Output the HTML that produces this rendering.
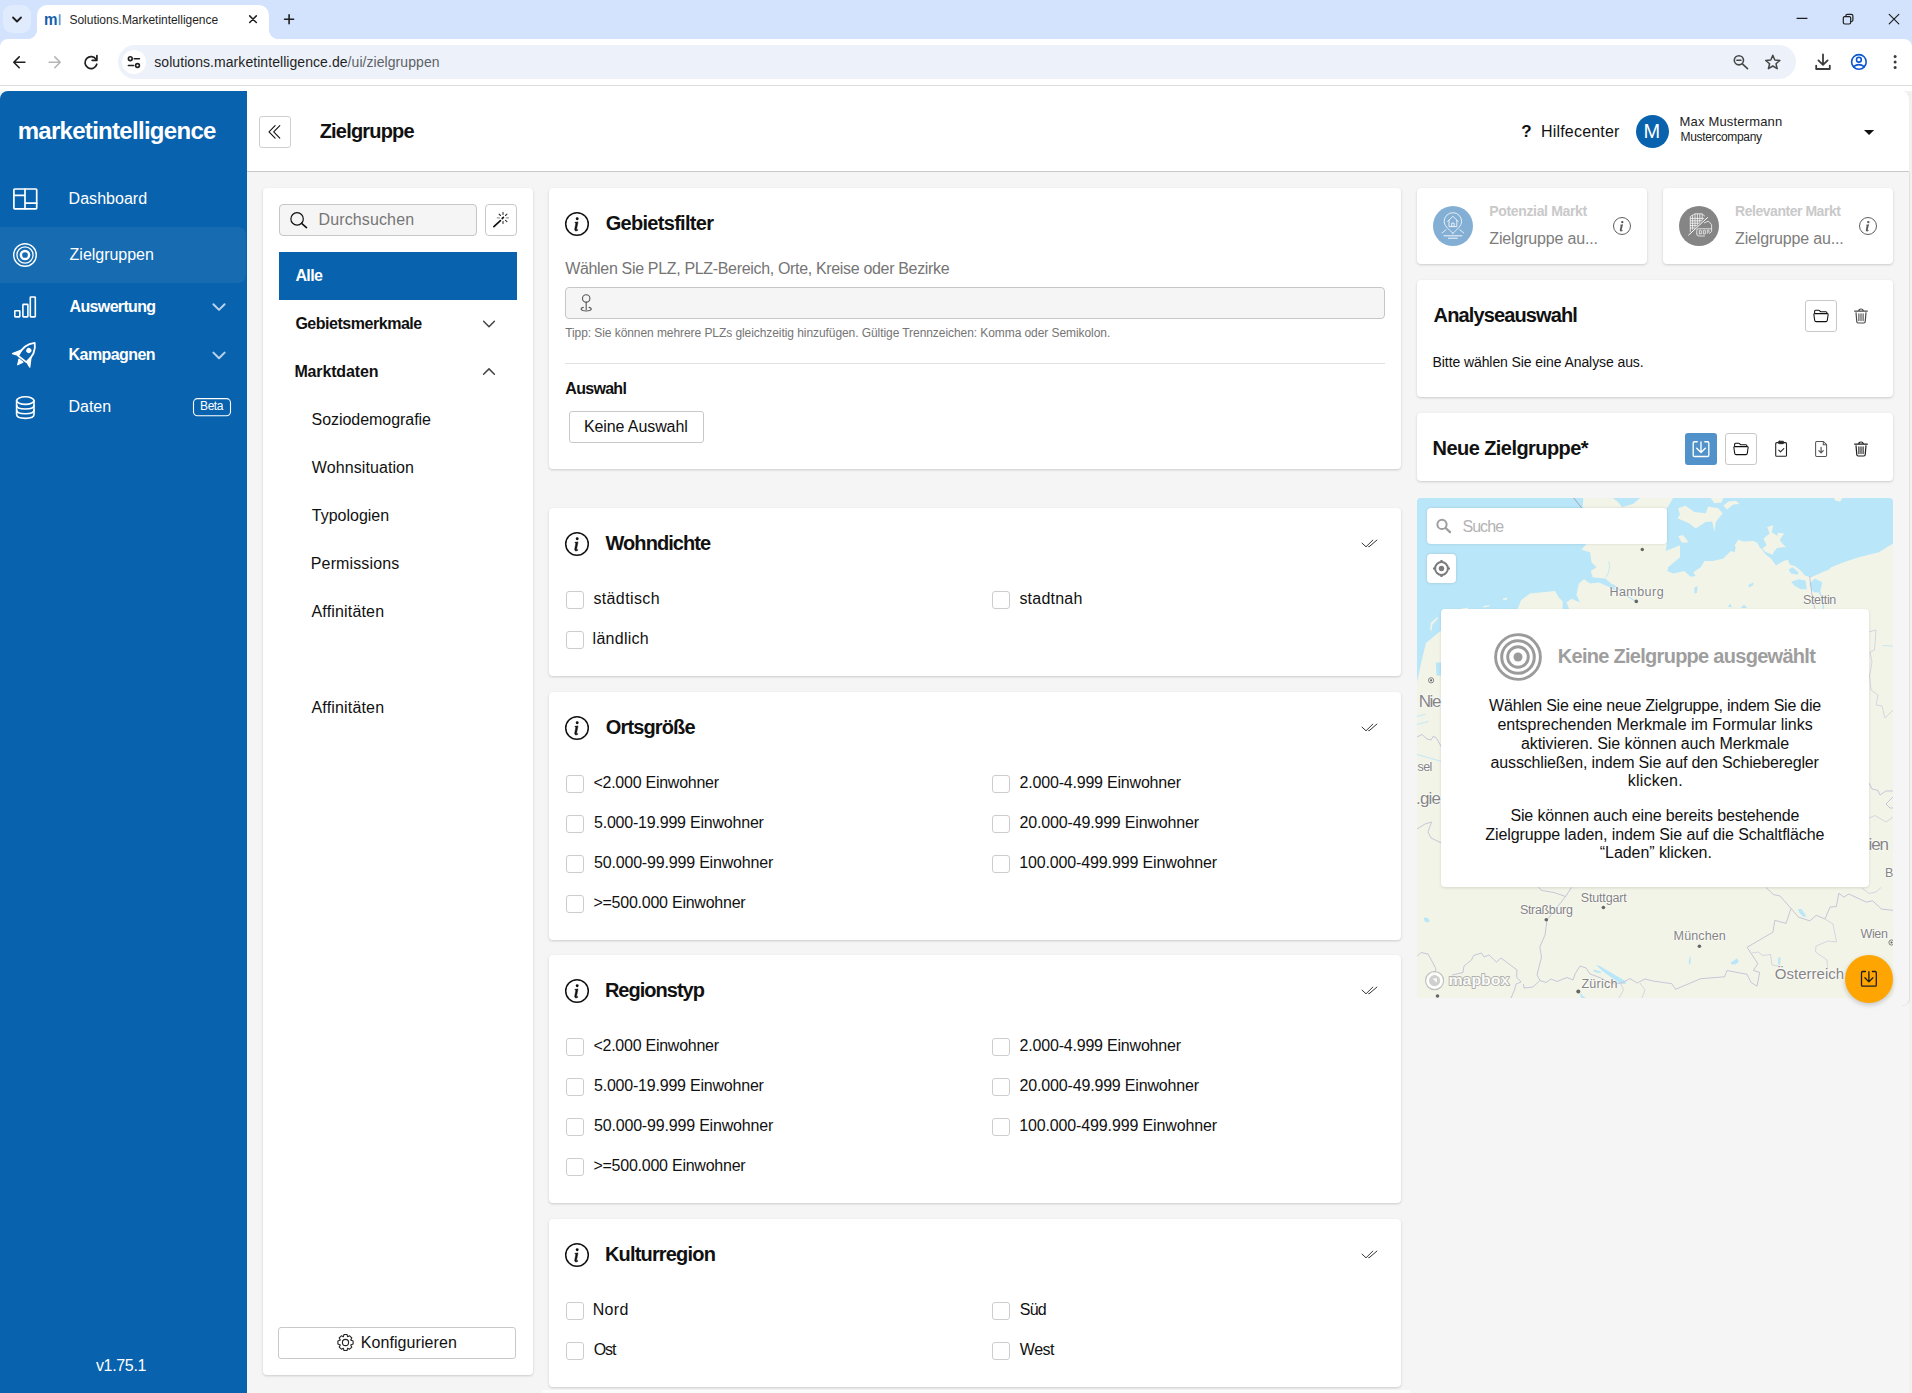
<!DOCTYPE html>
<html lang="de">
<head>
<meta charset="utf-8">
<title>Solutions.Marketintelligence</title>
<style>
*{box-sizing:border-box;margin:0;padding:0}
html,body{width:1912px;height:1393px;overflow:hidden}
body{font-family:"Liberation Sans",sans-serif;background:#f5f5f5;color:#111;position:relative;font-size:16px}
.abs{position:absolute}
.t{position:absolute;white-space:nowrap;line-height:1}
svg{display:block;overflow:visible}
/* ---------- browser chrome ---------- */
#tabstrip{left:0;top:0;width:1912px;height:50px;background:#d3e3fd}
#tabsearch{left:3px;top:5px;width:28px;height:28px;border-radius:9px;background:#e0ebfd}
#tab{left:37px;top:5px;width:232px;height:34px;background:#fff;border-radius:10px 10px 0 0}
#tab:before,#tab:after{content:"";position:absolute;bottom:0;width:10px;height:10px}
#tab:before{left:-10px;background:radial-gradient(circle at 0 0,transparent 10px,#fff 10.5px)}
#tab:after{right:-10px;background:radial-gradient(circle at 100% 0,transparent 10px,#fff 10.5px)}
#toolbar{left:0;top:39px;width:1912px;height:46px;background:#fff;border-radius:8px 8px 0 0}
#tbsep{left:0;top:85px;width:1912px;height:1px;background:#dadce0}
#undersep{left:0;top:86px;width:1912px;height:5px;background:#fff}
#omni{left:118px;top:45px;width:1678px;height:34px;border-radius:17px;background:#edf2fa}
#siteinfo{left:122px;top:50px;width:24px;height:24px;border-radius:12px;background:#fff}
/* ---------- app ---------- */
#sidebar{left:0;top:91px;width:247px;height:1302px;background:#0962ad;border-radius:8px 0 0 0;color:#fff}
#navactive{left:0;top:227px;width:246px;height:56px;background:#166bb1;border-radius:0 8px 8px 0}
#header{left:247px;top:91px;width:1663px;height:81px;background:#fff;border-bottom:1px solid #c9c9c9;border-right:1px solid #dcdcdc;border-radius:0 7px 0 0}
#rightedge{left:1909px;top:91px;width:3px;height:1302px;background:#f1f1f1}
.card{position:absolute;background:#fff;border-radius:4px;box-shadow:0 1px 3px rgba(0,0,0,.13),0 1px 2px rgba(0,0,0,.05)}
.btn{position:absolute;border:1px solid #cfcfcf;border-radius:3px;background:#fff}
.cb{position:absolute;width:18px;height:18px;border:1px solid #cdcdcd;border-radius:3px;background:#fff}
.navtxt{color:#fff;font-size:16px}
.b{font-weight:bold}
</style>
</head>
<body>
<!-- ================= BROWSER CHROME ================= -->
<div id="tabstrip" class="abs"></div>
<div id="tabsearch" class="abs"></div>
<div id="tab" class="abs"></div>
<div id="toolbar" class="abs"></div>
<div id="tbsep" class="abs"></div>
<div id="undersep" class="abs"></div>
<div id="omni" class="abs"></div>
<div id="siteinfo" class="abs"></div>
<svg class="abs" style="left:0;top:0" width="1912" height="90" viewBox="0 0 1912 90" fill="none" stroke="#1f1f1f" stroke-width="1.6" stroke-linecap="round" stroke-linejoin="round">
  <!-- tab search chevron -->
  <path d="M13 17.5 L17 21.5 L21 17.5" stroke-width="1.8"/>
  <!-- favicon mi -->
  <g stroke="none">
    <text x="44" y="25.2" style="font-family:'Liberation Sans',sans-serif" font-weight="bold" font-size="17" fill="#1460aa" textLength="13.5" lengthAdjust="spacingAndGlyphs">m</text>
    <rect x="58.8" y="14.2" width="1.8" height="11" fill="#6a9bd0"/>
  </g>
  <!-- tab close -->
  <path d="M249.7 15.9 L256.3 22.5 M256.3 15.9 L249.7 22.5" stroke-width="1.5"/>
  <!-- new tab plus -->
  <path d="M284.6 19.2 H293.6 M289.1 14.7 V23.7" stroke-width="1.6"/>
  <!-- window controls -->
  <path d="M1797 18.3 H1807" stroke-width="1.2"/>
  <rect x="1843.3" y="16.6" width="7.4" height="7.4" rx="1.4" stroke-width="1.2"/>
  <path d="M1845.8 16.4 V15.9 Q1845.8 14.4 1847.3 14.4 H1851.4 Q1852.9 14.4 1852.9 15.9 V20 Q1852.9 21.5 1851.4 21.5 H1850.9" stroke-width="1.2"/>
  <path d="M1889.2 14.3 L1898.8 23.9 M1898.8 14.3 L1889.2 23.9" stroke-width="1.2"/>
  <!-- back -->
  <path d="M24.9 62.3 H14 M19.2 56.9 L13.8 62.3 L19.2 67.7" stroke-width="1.6"/>
  <!-- forward (disabled) -->
  <path d="M49.1 62.3 H60 M54.8 56.9 L60.2 62.3 L54.8 67.7" stroke="#b6b6b6" stroke-width="1.6"/>
  <!-- reload -->
  <path d="M96.2 59.6 A6 6 0 1 0 96.8 64.2" stroke-width="1.7"/>
  <path d="M96.9 55.6 V60.3 H92.2" stroke-width="1.7"/>
  <!-- site info (tune) -->
  <g stroke-width="1.6">
    <circle cx="130.3" cy="58.7" r="1.9"/><path d="M134.2 58.7 H139.4"/>
    <circle cx="137.5" cy="65.5" r="1.9"/><path d="M128.4 65.5 H133.6"/>
  </g>
  <!-- zoom out magnifier -->
  <g stroke="#474747" stroke-width="1.6">
    <circle cx="1738.9" cy="60.3" r="4.6"/><path d="M1742.4 63.9 L1747.5 68.7"/><path d="M1736.8 60.3 H1741" stroke-width="1.4"/>
  </g>
  <!-- star -->
  <path d="M1772.8 55.3 L1774.8 60 L1779.9 60.4 L1776 63.7 L1777.2 68.7 L1772.8 66 L1768.4 68.7 L1769.6 63.7 L1765.7 60.4 L1770.8 60 Z" stroke="#474747" stroke-width="1.5"/>
  <!-- download -->
  <g stroke="#3b3b3b" stroke-width="1.8">
    <path d="M1823 54.5 V64.6 M1818.4 60.4 L1823 64.9 L1827.6 60.4"/>
    <path d="M1816.2 65.6 V69 H1829.8 V65.6"/>
  </g>
  <!-- profile -->
  <g stroke="#0b57d0" stroke-width="1.6">
    <circle cx="1858.9" cy="61.9" r="7.3"/>
    <circle cx="1858.9" cy="59.7" r="2.4"/>
    <path d="M1853.6 66.6 Q1858.9 62.6 1864.2 66.6"/>
  </g>
  <!-- menu dots -->
  <g fill="#3b3b3b" stroke="none"><circle cx="1895.1" cy="56.5" r="1.5"/><circle cx="1895.1" cy="62" r="1.5"/><circle cx="1895.1" cy="67.5" r="1.5"/></g>
</svg>

<!-- ================= APP ================= -->
<div id="sidebar" class="abs"></div>
<div id="navactive" class="abs"></div>
<div id="header" class="abs"></div>
<div id="rightedge" class="abs"></div>
<div class="abs" style="left:1902px;top:172px;width:8px;height:834px;border-right:1px solid #e1e1e1;border-bottom:1px solid #e9e9e9;border-bottom-right-radius:7px"></div>
<svg class="abs" style="left:0;top:91px" width="247" height="400" viewBox="0 91 247 400" fill="none" stroke="#fff" stroke-width="1.7" stroke-linejoin="round" stroke-linecap="round">
  <!-- dashboard -->
  <rect x="13.9" y="189" width="22.8" height="19.8" rx="0.8"/>
  <path d="M25 189 V208.8 M13.9 195.4 H25 M25 203.2 H36.7"/>
  <!-- zielgruppen target -->
  <circle cx="25" cy="255" r="11.3" stroke-width="1.4"/>
  <circle cx="25" cy="255" r="8.1" stroke-width="1.3"/>
  <circle cx="25" cy="255" r="4.1" stroke-width="2.5"/>
  <!-- bars -->
  <rect x="14.8" y="310.7" width="5" height="6.2" rx="0.6" stroke-width="1.6"/>
  <rect x="22.9" y="304.4" width="5" height="12.5" rx="0.6" stroke-width="1.6"/>
  <rect x="30.3" y="297" width="5" height="19.9" rx="0.6" stroke-width="1.6"/>
  <!-- rocket -->
  <g transform="translate(25 355.4) rotate(38)">
    <path d="M0 -15.8 C5.6 -10.5 7 -3 5.2 4.5 H-5.2 C-7 -3 -5.6 -10.5 0 -15.8 Z" stroke-width="1.8"/>
    <circle cx="0" cy="-6.2" r="2.6" fill="#fff" stroke="none"/>
    <path d="M-5.8 -2.5 L-11 6.3 L-5.2 4.2 Z" fill="#fff" stroke-width="1.2"/>
    <path d="M5.8 -2.5 L11 6.3 L5.2 4.2 Z" fill="#fff" stroke-width="1.2"/>
    <path d="M-2.6 6.6 H2.6 L0 12 Z" fill="#fff" stroke-width="1"/>
  </g>
  <!-- database -->
  <g stroke-width="1.6">
    <ellipse cx="25.3" cy="400.6" rx="8.7" ry="3.8"/>
    <path d="M16.6 400.6 V414.6 C16.6 419.6 34 419.6 34 414.6 V400.6"/>
    <path d="M16.6 405.3 C16.6 410.3 34 410.3 34 405.3"/>
    <path d="M16.6 410 C16.6 415 34 415 34 410"/>
  </g>
  <!-- chevrons -->
  <path d="M213.4 304.3 L219 309.9 L224.6 304.3" stroke="#bcd3ea" stroke-width="2"/>
  <path d="M213.4 352.6 L219 358.2 L224.6 352.6" stroke="#bcd3ea" stroke-width="2"/>
  <!-- beta badge -->
  <rect x="193.5" y="398.6" width="37" height="17.2" rx="4" stroke-width="1.1"/>
</svg>
<div class="btn" style="left:259px;top:116px;width:32px;height:32px"></div>
<svg class="abs" style="left:259px;top:116px" width="32" height="32" viewBox="259 116 32 32" fill="none" stroke="#111" stroke-width="1.1" stroke-linecap="round" stroke-linejoin="round">
  <path d="M275.1 125.7 L269 131.9 L275.1 138.1 M279.8 125.7 L273.7 131.9 L279.8 138.1"/>
</svg>
<div class="abs" style="left:1636px;top:115px;width:33px;height:33px;border-radius:50%;background:#0962ad"></div>
<svg class="abs" style="left:1860px;top:126px" width="20" height="12" viewBox="1860 126 20 12"><path d="M1864 130 H1874.2 L1869.1 135.1 Z" fill="#111"/></svg>

<!-- sub navigation panel -->
<div class="card" style="left:263px;top:188px;width:270px;height:1187px"></div>
<div class="abs" style="left:279px;top:204px;width:198px;height:32px;background:#f5f5f5;border:1px solid #c6c6c6;border-radius:4px"></div>
<div class="btn" style="left:485px;top:204px;width:32px;height:32px;border-color:#c9c9c9;border-radius:4px"></div>
<div class="abs" style="left:279px;top:252px;width:238px;height:48px;background:#0962ad"></div>
<svg class="abs" style="left:263px;top:188px" width="270" height="200" viewBox="263 188 270 200" fill="none" stroke="#111" stroke-linecap="round" stroke-linejoin="round">
  <!-- magnifier -->
  <circle cx="297.1" cy="218.9" r="6.2" stroke-width="1.2"/><path d="M301.6 223.4 L306.5 227.6" stroke-width="1.6"/>
  <!-- wand -->
  <path d="M493.9 226.6 L500.4 220.6" stroke-width="1.7"/>
  <path d="M502.2 218.5 L503.4 217.4" stroke-width="1.7"/>
  <g stroke-width="1.1" stroke="#333">
    <path d="M503 212.3 V214.5 M503 221.3 V223.5" />
    <path d="M497.3 217.9 H499.5 M506.3 217.9 H508.5" stroke="#999"/>
    <path d="M499.1 214.1 L500.5 215.5 M506.9 214.1 L505.5 215.5 M506.9 221.7 L505.5 220.3"/>
  </g>
  <!-- chevrons -->
  <path d="M483.6 321.3 L489 326.7 L494.4 321.3" stroke="#444" stroke-width="1.5"/>
  <path d="M483.6 374.3 L489 368.9 L494.4 374.3" stroke="#444" stroke-width="1.5"/>
</svg>
<div class="btn" style="left:278px;top:1327px;width:238px;height:32px;border-color:#c9c9c9"></div>
<svg class="abs" style="left:335px;top:1332px" width="21" height="21" viewBox="-10.5 -10.5 21 21" fill="none" stroke="#222" stroke-width="1.1" stroke-linejoin="round">
  <circle r="3.1"/>
  <path d="M-1.5 -8 H1.5 L2.1 -5.8 L4.1 -6.7 L6.3 -4.6 L5.2 -2.6 L7.6 -1.6 V1.6 L5.2 2.6 L6.3 4.6 L4.1 6.7 L2.1 5.8 L1.5 8 H-1.5 L-2.1 5.8 L-4.1 6.7 L-6.3 4.6 L-5.2 2.6 L-7.6 1.6 V-1.6 L-5.2 -2.6 L-6.3 -4.6 L-4.1 -6.7 L-2.1 -5.8 Z"/>
</svg>

<!-- centre cards -->
<div class="card" style="left:549px;top:188px;width:852px;height:281px"></div>
<div class="card" style="left:549px;top:508px;width:852px;height:168px"></div>
<div class="card" style="left:549px;top:692px;width:852px;height:248px"></div>
<div class="card" style="left:549px;top:955px;width:852px;height:248px"></div>
<div class="card" style="left:549px;top:1219px;width:852px;height:168px"></div>
<div class="abs" style="left:542px;top:1390px;width:868px;height:3px;background:#fbfbfb"></div>
<svg class="abs" style="left:563.9px;top:210.85px;color:#111" width="26" height="26" viewBox="-13 -13 26 26"><circle r="11.3" fill="none" stroke="currentColor" stroke-width="1.5"/><circle cx="0.2" cy="-5.2" r="1.45" fill="currentColor"/><path d="M-2 -1.7 L1 -2.1 L-0.4 5 Q-0.6 6.2 0.8 5.6 L0.9 6.2 Q-1.2 7.6 -2 6.6 Q-2.5 6 -2.2 4.6 L-1.1 -0.9 L-2.1 -1 Z" fill="currentColor" stroke="currentColor" stroke-width="0.5" stroke-linejoin="round"/></svg>
<svg class="abs" style="left:563.9px;top:530.85px;color:#111" width="26" height="26" viewBox="-13 -13 26 26"><circle r="11.3" fill="none" stroke="currentColor" stroke-width="1.5"/><circle cx="0.2" cy="-5.2" r="1.45" fill="currentColor"/><path d="M-2 -1.7 L1 -2.1 L-0.4 5 Q-0.6 6.2 0.8 5.6 L0.9 6.2 Q-1.2 7.6 -2 6.6 Q-2.5 6 -2.2 4.6 L-1.1 -0.9 L-2.1 -1 Z" fill="currentColor" stroke="currentColor" stroke-width="0.5" stroke-linejoin="round"/></svg>
<svg class="abs" style="left:563.9px;top:714.85px;color:#111" width="26" height="26" viewBox="-13 -13 26 26"><circle r="11.3" fill="none" stroke="currentColor" stroke-width="1.5"/><circle cx="0.2" cy="-5.2" r="1.45" fill="currentColor"/><path d="M-2 -1.7 L1 -2.1 L-0.4 5 Q-0.6 6.2 0.8 5.6 L0.9 6.2 Q-1.2 7.6 -2 6.6 Q-2.5 6 -2.2 4.6 L-1.1 -0.9 L-2.1 -1 Z" fill="currentColor" stroke="currentColor" stroke-width="0.5" stroke-linejoin="round"/></svg>
<svg class="abs" style="left:563.9px;top:977.85px;color:#111" width="26" height="26" viewBox="-13 -13 26 26"><circle r="11.3" fill="none" stroke="currentColor" stroke-width="1.5"/><circle cx="0.2" cy="-5.2" r="1.45" fill="currentColor"/><path d="M-2 -1.7 L1 -2.1 L-0.4 5 Q-0.6 6.2 0.8 5.6 L0.9 6.2 Q-1.2 7.6 -2 6.6 Q-2.5 6 -2.2 4.6 L-1.1 -0.9 L-2.1 -1 Z" fill="currentColor" stroke="currentColor" stroke-width="0.5" stroke-linejoin="round"/></svg>
<svg class="abs" style="left:563.9px;top:1241.85px;color:#111" width="26" height="26" viewBox="-13 -13 26 26"><circle r="11.3" fill="none" stroke="currentColor" stroke-width="1.5"/><circle cx="0.2" cy="-5.2" r="1.45" fill="currentColor"/><path d="M-2 -1.7 L1 -2.1 L-0.4 5 Q-0.6 6.2 0.8 5.6 L0.9 6.2 Q-1.2 7.6 -2 6.6 Q-2.5 6 -2.2 4.6 L-1.1 -0.9 L-2.1 -1 Z" fill="currentColor" stroke="currentColor" stroke-width="0.5" stroke-linejoin="round"/></svg>
<svg class="abs" style="left:1360.9px;top:539.0px" width="18" height="10" viewBox="0 0 18 10"><path d="M1 4.1 L5 7.8 L11.8 1.1 M7.6 7.6 L7.9 7.9 L15.9 1.1" fill="none" stroke="#2b2b2b" stroke-width="0.95" stroke-linecap="round" stroke-linejoin="round"/></svg>
<svg class="abs" style="left:1360.9px;top:723.0px" width="18" height="10" viewBox="0 0 18 10"><path d="M1 4.1 L5 7.8 L11.8 1.1 M7.6 7.6 L7.9 7.9 L15.9 1.1" fill="none" stroke="#2b2b2b" stroke-width="0.95" stroke-linecap="round" stroke-linejoin="round"/></svg>
<svg class="abs" style="left:1360.9px;top:986.0px" width="18" height="10" viewBox="0 0 18 10"><path d="M1 4.1 L5 7.8 L11.8 1.1 M7.6 7.6 L7.9 7.9 L15.9 1.1" fill="none" stroke="#2b2b2b" stroke-width="0.95" stroke-linecap="round" stroke-linejoin="round"/></svg>
<svg class="abs" style="left:1360.9px;top:1250.0px" width="18" height="10" viewBox="0 0 18 10"><path d="M1 4.1 L5 7.8 L11.8 1.1 M7.6 7.6 L7.9 7.9 L15.9 1.1" fill="none" stroke="#2b2b2b" stroke-width="0.95" stroke-linecap="round" stroke-linejoin="round"/></svg>
<div class="abs" style="left:565px;top:287px;width:820px;height:32px;background:#f5f5f5;border:1px solid #c6c6c6;border-radius:4px"></div>
<svg class="abs" style="left:578px;top:292px" width="18" height="22" viewBox="578 292 18 22" fill="none" stroke="#555" stroke-width="1.1" stroke-linecap="round"><circle cx="586.2" cy="298.4" r="3.7"/><path d="M586.2 302.2 V309.6"/><path d="M583.3 307.4 C579.6 308.4 580.6 311 586.2 311 C591.8 311 592.8 308.4 589.1 307.4"/></svg>
<div class="abs" style="left:565px;top:363px;width:820px;height:1px;background:#e2e2e2"></div>
<div class="btn" style="left:569px;top:411px;width:135px;height:32px;border-color:#c9c9c9"></div>
<div class="cb" style="left:566px;top:591px"></div>
<div class="cb" style="left:992px;top:591px"></div>
<div class="cb" style="left:566px;top:631px"></div>
<div class="cb" style="left:566px;top:775px"></div>
<div class="cb" style="left:992px;top:775px"></div>
<div class="cb" style="left:566px;top:815px"></div>
<div class="cb" style="left:992px;top:815px"></div>
<div class="cb" style="left:566px;top:855px"></div>
<div class="cb" style="left:992px;top:855px"></div>
<div class="cb" style="left:566px;top:895px"></div>
<div class="cb" style="left:566px;top:1038px"></div>
<div class="cb" style="left:992px;top:1038px"></div>
<div class="cb" style="left:566px;top:1078px"></div>
<div class="cb" style="left:992px;top:1078px"></div>
<div class="cb" style="left:566px;top:1118px"></div>
<div class="cb" style="left:992px;top:1118px"></div>
<div class="cb" style="left:566px;top:1158px"></div>
<div class="cb" style="left:566px;top:1302px"></div>
<div class="cb" style="left:992px;top:1302px"></div>
<div class="cb" style="left:566px;top:1342px"></div>
<div class="cb" style="left:992px;top:1342px"></div>

<!-- right column -->
<div class="card" style="left:1417px;top:188px;width:230px;height:76px"></div>
<div class="card" style="left:1663px;top:188px;width:230px;height:76px"></div>
<div class="card" style="left:1417px;top:280px;width:476px;height:117px"></div>
<div class="card" style="left:1417px;top:413px;width:476px;height:68px"></div>
<!-- stat cards -->
<div class="abs" style="left:1433px;top:206px;width:40px;height:40px;border-radius:50%;background:#84afd5"></div>
<svg class="abs" style="left:1433px;top:206px" width="40" height="40" viewBox="1433 206 40 40" fill="none" stroke="#fff" stroke-width="0.8" stroke-linecap="round" stroke-linejoin="round">
  <path d="M1452.9 233.3 C1448 228.6 1444.2 225.6 1444.2 221.4 A8.7 8.7 0 0 1 1461.6 221.4 C1461.6 225.6 1457.8 228.6 1452.9 233.3 Z"/>
  <path d="M1447.6 221.4 L1452.9 216.3 L1458.2 221.4 M1449 220.3 V226.6 H1456.8 V220.3 M1451.7 226.6 V223.2 H1454.1 V226.6"/>
  <path d="M1442 233 L1446 229.8 M1463.8 233 L1459.8 229.8"/>
  <path d="M1444 235.8 H1461.8 M1448.4 238.2 H1457.4" stroke-width="0.9"/>
</svg>
<div class="abs" style="left:1679px;top:206px;width:40px;height:40px;border-radius:50%;background:#858585"></div>
<svg class="abs" style="left:1679px;top:206px" width="40" height="40" viewBox="1679 206 40 40" fill="none" stroke="#fff" stroke-width="0.75" stroke-linecap="round" stroke-linejoin="round">
  <path d="M1690.3 231.5 V216.5 L1695 213.8 H1702 L1704.6 216 "/>
  <path d="M1692.6 215.4 V229.3 M1695 214.2 V227 M1697.4 214.2 V224.8 M1699.8 214.2 V222.4 M1702.2 214.2 V220"/>
  <path d="M1690.3 218.4 H1703.8 M1690.3 220.8 H1701.6 M1690.3 223.2 H1699.4 M1690.3 225.6 H1697.2 M1690.3 228 H1694.8"/>
  <path d="M1688.7 235 L1707.6 217.5" stroke-width="1"/>
  <path d="M1704.4 222.8 L1708.4 221.2 L1711.6 224.6 V231.4 L1709.6 233.4"/>
  <path d="M1696.8 234 V230 Q1696.8 228.8 1698 228.8 H1711 M1696.8 234 Q1696.8 236 1698.8 236 H1704.5"/>
  <path d="M1699.3 233.6 V230.6 Q1700.3 229.8 1701.3 230.6 V233.6 Z M1703.3 233.6 V230.6 Q1704.3 229.8 1705.3 230.6 V233.6 Z M1707.3 233.2 V230.4 Q1708.2 229.7 1709 230.4 V232.4"/>
</svg>
<svg class="abs" style="left:1608.8px;top:212.9px;color:#5a5a5a" width="26" height="26" viewBox="-17.3 -17.3 34.6 34.6"><circle r="11.3" fill="none" stroke="currentColor" stroke-width="1.3"/><circle cx="0.4" cy="-5.2" r="1.6" fill="currentColor"/><path d="M-2.4 -1.6 L1.4 -2.2 L-0.4 5 Q-0.6 6.2 1 5.6 L1.1 6.3 Q-1.4 7.9 -2.6 6.8 Q-3.1 6.2 -2.8 4.6 L-1.7 -0.7 L-2.5 -0.8 Z" fill="currentColor"/></svg>
<svg class="abs" style="left:1854.7px;top:212.9px;color:#5a5a5a" width="26" height="26" viewBox="-17.3 -17.3 34.6 34.6"><circle r="11.3" fill="none" stroke="currentColor" stroke-width="1.3"/><circle cx="0.4" cy="-5.2" r="1.6" fill="currentColor"/><path d="M-2.4 -1.6 L1.4 -2.2 L-0.4 5 Q-0.6 6.2 1 5.6 L1.1 6.3 Q-1.4 7.9 -2.6 6.8 Q-3.1 6.2 -2.8 4.6 L-1.7 -0.7 L-2.5 -0.8 Z" fill="currentColor"/></svg>
<!-- Analyseauswahl actions -->
<div class="btn" style="left:1805px;top:300px;width:32px;height:32px;border-color:#c9c9c9"></div>
<svg class="abs" style="left:1813px;top:308px;color:#111" width="16" height="16" viewBox="0 0 16 16"><path d="M1.6 5.3 V3.2 Q1.6 2.3 2.5 2.3 H5.6 Q6.2 2.3 6.7 2.8 L7.5 3.7 H12.8 Q13.9 3.7 13.9 4.8 V5.5" fill="none" stroke="currentColor" stroke-width="1.05" stroke-linejoin="round"/><path d="M1.9 5.6 H14.1 Q15.3 5.6 15.1 6.8 L14.3 12.4 Q14.1 13.6 12.9 13.6 H3.1 Q1.9 13.6 1.7 12.4 L0.9 6.8 Q0.7 5.6 1.9 5.6 Z" fill="none" stroke="currentColor" stroke-width="1.05" stroke-linejoin="round"/></svg>
<svg class="abs" style="left:1854px;top:308px;color:#4a4a4a" width="14" height="16" viewBox="0 0 14 16"><path d="M0.7 3.2 H13.3 M4.8 3 Q4.8 1 7 1 Q9.2 1 9.2 3" fill="none" stroke="currentColor" stroke-width="1.2" stroke-linecap="round"/><path d="M2 4.4 L2.8 13.8 Q2.9 15 4.1 15 H9.9 Q11.1 15 11.2 13.8 L12 4.4" fill="none" stroke="currentColor" stroke-width="1.2" stroke-linejoin="round"/><path d="M4.9 5.8 V12.6 M7 5.8 V12.6 M9.1 5.8 V12.6" stroke="currentColor" stroke-width="1.1" stroke-linecap="round"/></svg>
<!-- Neue Zielgruppe actions -->
<div class="abs" style="left:1685px;top:433px;width:32px;height:32px;border-radius:3px;background:#5092c9"></div>
<svg class="abs" style="left:1685px;top:433px" width="32" height="32" viewBox="1685 433 32 32" fill="none" stroke="#fff" stroke-width="1.35" stroke-linecap="round" stroke-linejoin="round">
  <path d="M1697.2 441.7 H1694.4 Q1693.2 441.7 1693.2 442.9 V455.3 Q1693.2 456.5 1694.4 456.5 H1707.6 Q1708.8 456.5 1708.8 455.3 V442.9 Q1708.8 441.7 1707.6 441.7 H1704.8"/>
  <path d="M1701 441.9 V452.2 M1696.7 448.2 L1701 452.5 L1705.3 448.2"/>
</svg>
<div class="btn" style="left:1725px;top:433px;width:32px;height:32px;border-color:#c9c9c9"></div>
<svg class="abs" style="left:1733px;top:441px;color:#111" width="16" height="16" viewBox="0 0 16 16"><path d="M1.6 5.3 V3.2 Q1.6 2.3 2.5 2.3 H5.6 Q6.2 2.3 6.7 2.8 L7.5 3.7 H12.8 Q13.9 3.7 13.9 4.8 V5.5" fill="none" stroke="currentColor" stroke-width="1.05" stroke-linejoin="round"/><path d="M1.9 5.6 H14.1 Q15.3 5.6 15.1 6.8 L14.3 12.4 Q14.1 13.6 12.9 13.6 H3.1 Q1.9 13.6 1.7 12.4 L0.9 6.8 Q0.7 5.6 1.9 5.6 Z" fill="none" stroke="currentColor" stroke-width="1.05" stroke-linejoin="round"/></svg>
<svg class="abs" style="left:1773px;top:439px" width="16" height="20" viewBox="1773 439 16 20" fill="none" stroke="#222" stroke-width="1.1" stroke-linecap="round" stroke-linejoin="round">
  <path d="M1778.3 442.6 H1776.8 Q1775.7 442.6 1775.7 443.7 V455.2 Q1775.7 456.3 1776.8 456.3 H1785.4 Q1786.5 456.3 1786.5 455.2 V443.7 Q1786.5 442.6 1785.4 442.6 H1783.9"/>
  <rect x="1778.4" y="441.2" width="5.4" height="2.5" rx="0.9" fill="#222" stroke-width="0.8"/>
  <path d="M1778.8 450.2 L1780.5 451.9 L1783.8 448.6"/>
</svg>
<svg class="abs" style="left:1813px;top:439px" width="16" height="20" viewBox="1813 439 16 20" fill="none" stroke="#555" stroke-width="1.05" stroke-linecap="round" stroke-linejoin="round">
  <path d="M1823.4 441.5 H1816.8 Q1815.6 441.5 1815.6 442.7 V455.2 Q1815.6 456.4 1816.8 456.4 H1825.4 Q1826.6 456.4 1826.6 455.2 V444.7 Z"/>
  <path d="M1823.3 441.7 V444.8 H1826.4" />
  <path d="M1821.1 447.4 V452.6 M1818.9 450.6 L1821.1 452.8 L1823.3 450.6" stroke-width="1.2"/>
</svg>
<svg class="abs" style="left:1854px;top:441px;color:#1c1c1c" width="14" height="16" viewBox="0 0 14 16"><path d="M0.7 3.2 H13.3 M4.8 3 Q4.8 1 7 1 Q9.2 1 9.2 3" fill="none" stroke="currentColor" stroke-width="1.2" stroke-linecap="round"/><path d="M2 4.4 L2.8 13.8 Q2.9 15 4.1 15 H9.9 Q11.1 15 11.2 13.8 L12 4.4" fill="none" stroke="currentColor" stroke-width="1.2" stroke-linejoin="round"/><path d="M4.9 5.8 V12.6 M7 5.8 V12.6 M9.1 5.8 V12.6" stroke="currentColor" stroke-width="1.1" stroke-linecap="round"/></svg>
<!--RIGHT-CONTENT-END-->
<div class="abs" style="left:1417px;top:498px;width:476px;height:500px;border-radius:4px;overflow:hidden;background:#f3f4e8">
<svg width="476" height="500" viewBox="1417 498 476 500" style="position:absolute;left:0;top:0">
  <g fill="#b9e6f8" stroke="none">
    <!-- North Sea -->
    <path d="M1417 498 H1583.3 L1582.7 507.7 L1585.8 544.7 L1581.4 549.7 L1590.2 552.2 L1591.5 562.3 L1596.5 567.3 L1590.8 571.1 L1592.7 577.3 L1605.3 578.6 L1612.8 584.9 L1617.8 592.4 L1610.3 587.4 L1599 582.4 L1590.2 583.6 L1583.9 579.2 L1578.9 583.6 L1576.4 594.9 L1580.2 602.4 L1571.4 598.7 L1566.4 602.4 L1569.5 609.5 L1562.6 609.5 L1562.6 601.2 L1558.8 597.4 L1555.1 591.1 L1530 593.6 L1521.2 599.9 L1517.4 609.5 L1500 620 L1441.7 630 L1426 643 L1421.8 660 L1418.6 675 L1417 682 Z"/>
    <!-- Baltic -->
    <path d="M1673.1 498 L1669.3 504.5 L1666.8 508.3 L1666.8 544.1 L1665.6 551 L1680 545.3 L1680 557.2 L1668.1 567.3 L1667.4 571.1 L1673.1 573.6 L1684.4 571.1 L1690.7 576.7 L1695.7 576.1 L1693.2 572.3 L1700.7 567.3 L1704.5 561 L1713.2 561 L1723.3 558.5 L1730.8 551 L1734.6 552.2 L1735.8 547.2 L1734.6 545.3 L1738.4 539.7 L1743.4 541.6 L1753.4 540.9 L1757.2 542.8 L1759.7 547.2 L1762.2 549.7 L1766 554.7 L1771 558.5 L1776 565.4 L1783.5 561 L1787.9 559.8 L1789.8 564.8 L1794.8 566 L1801.1 571.1 L1804.9 575.4 L1811.2 577.3 L1825 571.1 L1828.7 569.8 L1831.2 567.3 L1843.8 562.3 L1858.8 557.2 L1878.9 552.2 L1889 546 L1893 543.4 V498 Z"/>
    <path d="M1613 498 H1640 L1633 504 L1622 507 L1618 502 Z"/>
    <!-- lagoons / lakes -->
    <path d="M1791.1 581.7 L1798.6 579.2 L1805.5 580.5 L1806.8 589.3 L1801.1 589.3 L1794.8 586.1 Z"/>
    <path d="M1809.3 583.6 L1814.9 578.6 L1822.4 582.4 L1819.9 592.4 L1814.9 592.4 L1811.2 589.9 Z"/>
    <path d="M1788.6 569.8 L1792.3 567.3 L1798.6 572.3 L1797.3 574.8 L1791.1 573.6 Z"/>
    <path d="M1748.4 584.9 L1753.4 582.4 L1753.4 584.9 L1749 587.4 Z"/>
    <path d="M1694.4 587.4 L1697.6 586.1 L1696.9 593 L1694.4 593.6 Z"/>
    <path d="M1435.8 662.5 H1441.7 V675.4 H1436.5 Z"/>
    <path d="M1728 607 L1730 603.5 L1732 607 Z M1741 608 L1744 604.5 L1747 608 Z"/>
    <!-- small south lakes -->
    <path d="M1690.3 955 L1688.6 962 L1689.6 965.5 L1690.8 961 Z"/>
    <path d="M1731 962.5 L1737 958.2 L1738.8 961.2 L1736 964.3 L1731 964.6 Z"/>
    <path d="M1778.3 957.5 H1780.6 L1780.2 964.5 H1778 Z"/>
    <path d="M1798 909 L1801.5 909 L1806.5 916.3 L1803.5 916.8 L1799.5 913 Z"/>
    <path d="M1424 917.5 L1428 918 L1429.8 921.5 L1426.5 922.5 L1424.2 920.5 Z"/>
    <path d="M1596.3 965.3 L1599 965.5 L1624.5 980.5 L1626.5 984 L1620 983.2 L1610 976.5 L1603 971.5 Z"/>
    <path d="M1593.5 969.5 L1600.5 971.5 L1601 973.2 L1594 972 Z"/>
    <path d="M1580 992 L1583 996 L1586 998 H1581 Z"/>
  </g>
  <g fill="#f3f4e8" stroke="none">
    <!-- Danish islands -->
    <path d="M1678.1 508.3 L1685.6 505.8 L1694.4 512.1 L1705.7 513.3 L1708.2 506.4 L1718.3 508.3 L1722.7 513.3 L1715.8 522.1 L1714.5 531.5 L1712 521.5 L1705.7 522.1 L1695.7 528.4 L1689.4 523.4 L1677.5 518.3 L1680 514.6 Z"/>
    <path d="M1678.1 535.9 L1683.1 535.3 L1688.8 542.2 L1681.9 542.8 Z"/>
    <path d="M1710.7 498 H1723.3 L1721.4 502.6 L1714.5 503.3 Z"/>
    <path d="M1723.3 505.8 L1728.3 501.4 L1735.8 500.8 L1739.6 503.9 L1733.3 504.5 L1727.1 509.6 Z"/>
    <!-- Ruegen -->
    <path d="M1763.5 538.4 L1769.7 533.4 L1767.2 527.1 L1773.5 525.2 L1771.6 532.1 L1777.3 535.9 L1777.9 532.8 L1784.2 533.4 L1779.8 539.7 L1782.3 543.4 L1786 547.2 L1783.5 547.2 L1777.3 547.8 L1773.5 552.2 L1772.9 554.7 L1766 552.2 L1762.2 548.5 L1766.6 545.3 Z"/>
    <path d="M1833.7 498 H1842.5 L1840 501.4 L1835.6 500.8 Z"/>
    <!-- frisian islands -->
    <path d="M1503 598.5 L1507.5 597.6 L1507 599.4 L1503.2 600.2 Z M1483 606.3 L1489.5 605 L1489 606.6 L1483.3 607.6 Z M1462 608.5 L1468 607.6 V609 H1462 Z"/>
    <path d="M1431 622.5 L1437.5 617 L1438 618.5 L1432.5 624.5 L1431.3 631 L1430 630 Z"/>
  </g>
  <!-- rivers -->
  <g fill="none" stroke="#b9e6f8" stroke-width="1.3" stroke-linecap="round">
    <path d="M1612.8 584.9 L1620 590 L1628 596.5 L1636 601.5"/>
    <path d="M1609 562 Q1611 570 1606 577" stroke-width="0.9"/>
    <path d="M1819.9 592.4 L1822.5 600 L1823.5 609" stroke-width="1.6"/>
    <path d="M1417 716.5 L1425 714.5 M1417 724.5 L1428 721.5 M1417 754.5 L1441.5 761.5" stroke-width="0.9"/>
    <path d="M1883 645.5 L1893 646" stroke-width="0.8"/>
  </g>
  <!-- borders -->
  <g fill="none" stroke="#bcbed6" stroke-width="0.85" stroke-linejoin="round">
    <path d="M1573.9 498 L1581.4 507.7" stroke="#9a9aa8"/>
    <path d="M1809.6 576 L1812.3 597 L1815 609.5"/>
    <!-- NL/DE & BE borders left strip -->
    <path d="M1417 737 L1422 734.5 L1427 739 L1431 740 L1433 736.5 L1436 737.5 L1441.5 747"/>
    <path d="M1417 829 L1425 824 L1431.5 822 L1428 832 L1431 838 L1441.5 843"/>
    <!-- right strip -->
    <path d="M1869 632 L1876 630 L1874.5 650 L1870 652 L1872 662 L1869.5 676 L1871 690 L1878 695 L1876 705 L1882 706 L1885 718 L1893 710" stroke="#cfd0de"/>
    <path d="M1869 783 L1872 789 L1878 790.5 L1880 795 L1886 791 L1893 791"/>
    <path d="M1893 797 L1886 804 L1890 808 L1893 808"/>
    <path d="M1869 818 L1875 815.5 L1886 822 L1893 817" stroke="#cfd0de"/>
    <!-- Rhine / FR-DE -->
    <path d="M1571.4 887.5 L1565.6 896.5 L1547 920 L1545 935 L1539.8 947 L1541.5 957 L1537 975 L1540 980.5 L1533 987 L1524 988 L1523.5 984"/>
    <path d="M1538.5 887.5 L1542 890.5 L1554 892.5 L1565.6 896.5"/>
    <path d="M1540 980.5 L1546 982.5 L1551 979 L1557 981.5 L1567 977.5 L1573 980 L1575 974 L1580 966 L1586 968 L1590 974 L1601 978"/>
    <path d="M1417 956.5 L1421 952.5 L1428 954 L1433 963 L1436 969 L1433.5 975 M1452 975 L1463 972.5 L1464 966 L1471.5 960 L1473.5 955.5 L1481.5 953 L1484 957 L1489 955 L1496.5 962 L1501 958 L1517 970 L1516.5 977 L1521 982 L1516 984 L1514.5 990 L1511 998"/>
    <!-- DE-AT -->
    <path d="M1653 981 L1671.8 983.7 L1675.6 989.3 L1700.7 978.7 L1724.5 976.8 L1727 970.5 L1747 974.3 L1751 982.4 L1757 986.2 L1759.7 972.4 L1753.4 970.5 L1757.8 963.6 L1747.1 947.3 L1772.9 932.2 L1774.8 920.3 L1786 923.4 L1791 908.4 L1779.8 895.8 L1773.5 894.6 L1766 887.5"/>
    <path d="M1601 978 L1612 984 L1622 983 L1630 978.5 L1637 983 L1645 979 L1653 981"/>
    <!-- CZ-AT -->
    <path d="M1791 908.4 L1798.6 917.2 L1809.9 920.9 L1816.2 915.3 L1825 919 L1830 907.1 L1836.3 906.5 L1838.8 893.3 L1843.8 897.1 L1848.8 894 L1866.4 902.1 L1872.7 900.8 L1881.4 909 L1893 910.3"/>
    <path d="M1752 953 L1758 952 L1762.5 955.5 L1770.5 954.5 L1772 965 L1781 966.5" stroke="#cfd0de"/>
    <path d="M1825 919 L1833 924 L1836.5 942 L1828 941 L1816 946 L1815.5 952 L1827 960 L1827.5 968" stroke="#cfd0de"/>
    <path d="M1881 887.5 L1876 892 L1869 893.5 L1862 888" stroke="#cfd0de"/>
    <path d="M1620 982 L1623.5 990 L1619 998 M1640 983 L1645 990 L1642 998" stroke="#cfd0de"/>
  </g>
  <!-- city dots -->
  <g fill="#666">
    <circle cx="1642.3" cy="549.5" r="1.7"/><circle cx="1636.3" cy="601.4" r="1.8"/>
    <circle cx="1603.4" cy="907.5" r="1.8"/><circle cx="1546.3" cy="919.7" r="1.8"/>
    <circle cx="1699.4" cy="946.3" r="1.8"/><circle cx="1578.3" cy="991.5" r="2"/>
    <circle cx="1437.5" cy="996" r="1.8"/>
  </g>
  <g fill="none" stroke="#666" stroke-width="0.8"><circle cx="1431.1" cy="680.3" r="2.6"/><circle cx="1891.5" cy="942.5" r="2.6"/></g>
  <g fill="#666"><circle cx="1431.1" cy="680.3" r="1.1"/><circle cx="1891.5" cy="942.5" r="1.1"/></g>
</svg>
</div>

<!-- map overlays -->
<div class="abs" style="left:1427px;top:508px;width:240px;height:36px;background:#fff;border-radius:4px;box-shadow:0 0 3px rgba(0,0,0,.12)"></div>
<svg class="abs" style="left:1432px;top:514px" width="24" height="24" viewBox="1432 514 24 24" fill="none" stroke="#9e9e9e" stroke-width="2" stroke-linecap="round"><circle cx="1442" cy="524.4" r="4.6"/><path d="M1445.6 528 L1450 532.2" stroke-width="2.3"/></svg>
<div class="abs" style="left:1427px;top:554px;width:29px;height:29px;background:#fff;border-radius:4px;box-shadow:0 0 3px rgba(0,0,0,.15)"></div>
<svg class="abs" style="left:1427px;top:554px" width="29" height="29" viewBox="1427 554 29 29" fill="none" stroke="#7b7b7b" stroke-width="2"><circle cx="1441.5" cy="568.5" r="6.4"/><circle cx="1441.5" cy="568.5" r="2.7" fill="#7b7b7b" stroke="none"/><path d="M1441.5 560 V562.2 M1441.5 574.8 V577 M1433 568.5 H1435.2 M1447.8 568.5 H1450" stroke-width="2.2"/></svg>
<div class="abs" style="left:1441px;top:609px;width:428px;height:278px;background:#fff;border-radius:4px;box-shadow:0 1px 3px rgba(0,0,0,.12)"></div>
<svg class="abs" style="left:1492px;top:631px" width="52" height="52" viewBox="-26 -26 52 52" fill="none" stroke="#9b9b9b"><circle r="22.4" stroke-width="2.9"/><circle r="16.3" stroke-width="3"/><circle r="10.3" stroke-width="2.9"/><circle r="4.5" fill="#9b9b9b" stroke="none"/></svg>
<!-- mapbox logo -->
<svg class="abs" style="left:1423px;top:969px" width="90" height="24" viewBox="1423 969 90 24">
  <circle cx="1434.6" cy="980.6" r="9" fill="rgba(255,255,255,.85)" stroke="rgba(150,150,150,.55)" stroke-width="1.2"/>
  <circle cx="1434.6" cy="980.6" r="5.6" fill="rgba(160,160,160,.5)"/>
  <path d="M1432.5 978.5 L1437 978.2 L1436.8 982.8 Z" fill="rgba(255,255,255,.9)"/>
  <text x="1448.4" y="985" style="font-family:'Liberation Sans',sans-serif" font-weight="bold" font-size="15.5" textLength="61" lengthAdjust="spacingAndGlyphs" fill="rgba(255,255,255,.95)" stroke="rgba(120,120,120,.55)" stroke-width="1.8" stroke-linejoin="round" paint-order="stroke">mapbox</text>
</svg>
<!-- FAB -->
<div class="abs" style="left:1845px;top:955px;width:48px;height:48px;border-radius:50%;background:#ffa502;box-shadow:0 2px 5px rgba(0,0,0,.2)"></div>
<svg class="abs" style="left:1845px;top:955px" width="48" height="48" viewBox="1845 955 48 48" fill="none" stroke="#1e1e1e" stroke-width="1.3" stroke-linecap="round" stroke-linejoin="round">
  <path d="M1865.4 971.5 H1862.7 Q1861.5 971.5 1861.5 972.7 V984.9 Q1861.5 986.1 1862.7 986.1 H1875.1 Q1876.3 986.1 1876.3 984.9 V972.7 Q1876.3 971.5 1875.1 971.5 H1872.4"/>
  <path d="M1868.9 971.7 V981.6 M1864.9 977.8 L1868.9 981.9 L1872.9 977.8"/>
</svg>

<!--TEXTS-START-->
<div class="t" style="left:69.5px;top:14.00px;font-size:12px;letter-spacing:-0.03px;color:#1f1f1f;">Solutions.Marketintelligence</div>
<div class="t" style="left:154.3px;top:55.00px;font-size:14px;letter-spacing:0.06px;color:#1f1f1f;">solutions.marketintelligence.de<span style="color:#5e6166">/ui/zielgruppen</span></div>
<div class="t" style="left:17.7px;top:118.50px;font-size:24px;font-weight:bold;letter-spacing:-0.71px;color:#fff;">marketintelligence</div>
<div class="t" style="left:68.6px;top:190.50px;font-size:16px;letter-spacing:0.03px;color:#fff;">Dashboard</div>
<div class="t" style="left:69.6px;top:246.50px;font-size:16px;letter-spacing:-0.02px;color:#fff;">Zielgruppen</div>
<div class="t" style="left:69.6px;top:298.50px;font-size:16px;font-weight:bold;letter-spacing:-0.66px;color:#fff;">Auswertung</div>
<div class="t" style="left:68.6px;top:346.50px;font-size:16px;font-weight:bold;letter-spacing:-0.57px;color:#fff;">Kampagnen</div>
<div class="t" style="left:68.6px;top:398.50px;font-size:16px;letter-spacing:-0.05px;color:#fff;">Daten</div>
<div class="t" style="left:200.1px;top:400.00px;font-size:12px;letter-spacing:-0.47px;color:#fff;">Beta</div>
<div class="t" style="left:95.9px;top:1357.50px;font-size:16px;letter-spacing:-0.33px;color:#fff;">v1.75.1</div>
<div class="t" style="left:319.7px;top:121.00px;font-size:20px;font-weight:bold;letter-spacing:-0.81px;color:#111;">Zielgruppe</div>
<div class="t" style="left:1521.3px;top:123.00px;font-size:17px;font-weight:bold;color:#111;">?</div>
<div class="t" style="left:1541.0px;top:123.50px;font-size:16px;letter-spacing:0.19px;color:#111;">Hilfecenter</div>
<div class="t" style="left:1643.5px;top:121.00px;font-size:20px;color:#fff;">M</div>
<div class="t" style="left:1679.5px;top:115.00px;font-size:13px;letter-spacing:0.18px;color:#222;">Max Mustermann</div>
<div class="t" style="left:1680.5px;top:131.00px;font-size:12px;letter-spacing:-0.32px;color:#222;">Mustercompany</div>
<div class="t" style="left:318.5px;top:211.50px;font-size:16px;letter-spacing:0.13px;color:#757575;">Durchsuchen</div>
<div class="t" style="left:295.4px;top:267.50px;font-size:16px;font-weight:bold;letter-spacing:-0.62px;color:#fff;">Alle</div>
<div class="t" style="left:295.4px;top:315.50px;font-size:16px;font-weight:bold;letter-spacing:-0.47px;color:#111;">Gebietsmerkmale</div>
<div class="t" style="left:294.4px;top:363.50px;font-size:16px;font-weight:bold;letter-spacing:-0.14px;color:#111;">Marktdaten</div>
<div class="t" style="left:311.5px;top:411.50px;font-size:16px;letter-spacing:-0.04px;color:#111;">Soziodemografie</div>
<div class="t" style="left:311.8px;top:459.50px;font-size:16px;letter-spacing:0.09px;color:#111;">Wohnsituation</div>
<div class="t" style="left:311.8px;top:507.50px;font-size:16px;letter-spacing:-0.01px;color:#111;">Typologien</div>
<div class="t" style="left:310.8px;top:555.50px;font-size:16px;letter-spacing:0.13px;color:#111;">Permissions</div>
<div class="t" style="left:311.5px;top:603.50px;font-size:16px;letter-spacing:0.17px;color:#111;">Affinitäten</div>
<div class="t" style="left:311.5px;top:699.50px;font-size:16px;letter-spacing:0.17px;color:#111;">Affinitäten</div>
<div class="t" style="left:360.8px;top:1334.50px;font-size:16px;letter-spacing:0.07px;color:#111;">Konfigurieren</div>
<div class="t" style="left:605.7px;top:213.00px;font-size:20px;font-weight:bold;letter-spacing:-0.70px;color:#111;">Gebietsfilter</div>
<div class="t" style="left:565.2px;top:260.50px;font-size:16px;letter-spacing:-0.33px;color:#757575;">Wählen Sie PLZ, PLZ-Bereich, Orte, Kreise oder Bezirke</div>
<div class="t" style="left:565.2px;top:327.00px;font-size:12px;letter-spacing:-0.07px;color:#757575;">Tipp: Sie können mehrere PLZs gleichzeitig hinzufügen. Gültige Trennzeichen: Komma oder Semikolon.</div>
<div class="t" style="left:565.3px;top:380.50px;font-size:16px;font-weight:bold;letter-spacing:-0.71px;color:#111;">Auswahl</div>
<div class="t" style="left:583.9px;top:418.50px;font-size:16px;letter-spacing:-0.09px;color:#111;">Keine Auswahl</div>
<div class="t" style="left:605.5px;top:533.00px;font-size:20px;font-weight:bold;letter-spacing:-0.94px;color:#111;">Wohndichte</div>
<div class="t" style="left:593.4px;top:590.50px;font-size:16px;letter-spacing:0.38px;color:#111;">städtisch</div>
<div class="t" style="left:1019.4px;top:590.50px;font-size:16px;letter-spacing:0.22px;color:#111;">stadtnah</div>
<div class="t" style="left:592.6px;top:630.50px;font-size:16px;letter-spacing:0.26px;color:#111;">ländlich</div>
<div class="t" style="left:605.8px;top:717.00px;font-size:20px;font-weight:bold;letter-spacing:-0.87px;color:#111;">Ortsgröße</div>
<div class="t" style="left:593.4px;top:774.50px;font-size:16px;letter-spacing:-0.25px;color:#111;">&lt;2.000 Einwohner</div>
<div class="t" style="left:594.0px;top:814.50px;font-size:16px;letter-spacing:-0.21px;color:#111;">5.000-19.999 Einwohner</div>
<div class="t" style="left:594.0px;top:854.50px;font-size:16px;letter-spacing:-0.18px;color:#111;">50.000-99.999 Einwohner</div>
<div class="t" style="left:593.4px;top:894.50px;font-size:16px;letter-spacing:-0.24px;color:#111;">&gt;=500.000 Einwohner</div>
<div class="t" style="left:1019.6px;top:774.50px;font-size:16px;letter-spacing:-0.20px;color:#111;">2.000-4.999 Einwohner</div>
<div class="t" style="left:1019.6px;top:814.50px;font-size:16px;letter-spacing:-0.17px;color:#111;">20.000-49.999 Einwohner</div>
<div class="t" style="left:1019.2px;top:854.50px;font-size:16px;letter-spacing:-0.13px;color:#111;">100.000-499.999 Einwohner</div>
<div class="t" style="left:604.9px;top:980.00px;font-size:20px;font-weight:bold;letter-spacing:-0.98px;color:#111;">Regionstyp</div>
<div class="t" style="left:593.4px;top:1037.50px;font-size:16px;letter-spacing:-0.25px;color:#111;">&lt;2.000 Einwohner</div>
<div class="t" style="left:594.0px;top:1077.50px;font-size:16px;letter-spacing:-0.21px;color:#111;">5.000-19.999 Einwohner</div>
<div class="t" style="left:594.0px;top:1117.50px;font-size:16px;letter-spacing:-0.18px;color:#111;">50.000-99.999 Einwohner</div>
<div class="t" style="left:593.4px;top:1157.50px;font-size:16px;letter-spacing:-0.24px;color:#111;">&gt;=500.000 Einwohner</div>
<div class="t" style="left:1019.6px;top:1037.50px;font-size:16px;letter-spacing:-0.20px;color:#111;">2.000-4.999 Einwohner</div>
<div class="t" style="left:1019.6px;top:1077.50px;font-size:16px;letter-spacing:-0.17px;color:#111;">20.000-49.999 Einwohner</div>
<div class="t" style="left:1019.2px;top:1117.50px;font-size:16px;letter-spacing:-0.13px;color:#111;">100.000-499.999 Einwohner</div>
<div class="t" style="left:604.9px;top:1244.00px;font-size:20px;font-weight:bold;letter-spacing:-0.82px;color:#111;">Kulturregion</div>
<div class="t" style="left:592.8px;top:1301.50px;font-size:16px;letter-spacing:0.27px;color:#111;">Nord</div>
<div class="t" style="left:593.8px;top:1341.50px;font-size:16px;letter-spacing:-1.17px;color:#111;">Ost</div>
<div class="t" style="left:1019.8px;top:1301.50px;font-size:16px;letter-spacing:-0.84px;color:#111;">Süd</div>
<div class="t" style="left:1019.8px;top:1341.50px;font-size:16px;letter-spacing:-0.47px;color:#111;">West</div>
<div class="t" style="left:1489.3px;top:204.00px;font-size:14px;font-weight:bold;letter-spacing:-0.35px;color:#c9c9c9;">Potenzial Markt</div>
<div class="t" style="left:1489.3px;top:230.50px;font-size:16px;letter-spacing:-0.17px;color:#7d7d7d;">Zielgruppe au...</div>
<div class="t" style="left:1735.1px;top:204.00px;font-size:14px;font-weight:bold;letter-spacing:-0.47px;color:#c9c9c9;">Relevanter Markt</div>
<div class="t" style="left:1735.1px;top:230.50px;font-size:16px;letter-spacing:-0.17px;color:#7d7d7d;">Zielgruppe au...</div>
<div class="t" style="left:1433.6px;top:305.00px;font-size:20px;font-weight:bold;letter-spacing:-0.87px;color:#111;">Analyseauswahl</div>
<div class="t" style="left:1432.6px;top:355.00px;font-size:14px;letter-spacing:-0.09px;color:#111;">Bitte wählen Sie eine Analyse aus.</div>
<div class="t" style="left:1432.6px;top:438.00px;font-size:20px;font-weight:bold;letter-spacing:-0.57px;color:#111;">Neue Zielgruppe*</div>
<div class="t" style="left:1462.4px;top:518.50px;font-size:16px;letter-spacing:-0.92px;color:#b3b3b3;">Suche</div>
<div class="t" style="left:1557.8px;top:646.00px;font-size:20px;font-weight:bold;letter-spacing:-0.72px;color:#9e9e9e;">Keine Zielgruppe ausgewählt</div>
<div class="t" style="left:1489.1px;top:697.50px;font-size:16px;letter-spacing:-0.23px;color:#111;">Wählen Sie eine neue Zielgruppe, indem Sie die</div>
<div class="t" style="left:1497.4px;top:716.50px;font-size:16px;letter-spacing:-0.01px;color:#111;">entsprechenden Merkmale im Formular links</div>
<div class="t" style="left:1521.0px;top:735.50px;font-size:16px;letter-spacing:-0.09px;color:#111;">aktivieren. Sie können auch Merkmale</div>
<div class="t" style="left:1490.6px;top:754.50px;font-size:16px;letter-spacing:-0.16px;color:#111;">ausschließen, indem Sie auf den Schieberegler</div>
<div class="t" style="left:1627.7px;top:772.50px;font-size:16px;letter-spacing:0.23px;color:#111;">klicken.</div>
<div class="t" style="left:1510.4px;top:807.50px;font-size:16px;letter-spacing:-0.14px;color:#111;">Sie können auch eine bereits bestehende</div>
<div class="t" style="left:1485.3px;top:826.50px;font-size:16px;letter-spacing:-0.09px;color:#111;">Zielgruppe laden, indem Sie auf die Schaltfläche</div>
<div class="t" style="left:1599.8px;top:844.50px;font-size:16px;letter-spacing:-0.06px;color:#111;">“Laden” klicken.</div>
<div class="t" style="left:1609.4px;top:585.75px;font-size:12.5px;letter-spacing:0.47px;color:#838383;text-shadow:0 0 1.5px #fff,0 0 1.5px #fff,0 0 2px #fff;">Hamburg</div>
<div class="t" style="left:1803.0px;top:593.75px;font-size:12.5px;letter-spacing:-0.36px;color:#838383;text-shadow:0 0 1.5px #fff,0 0 1.5px #fff,0 0 2px #fff;">Stettin</div>
<div class="t" style="left:1580.8px;top:891.75px;font-size:12.5px;letter-spacing:-0.17px;color:#838383;text-shadow:0 0 1.5px #fff,0 0 1.5px #fff,0 0 2px #fff;">Stuttgart</div>
<div class="t" style="left:1519.9px;top:903.75px;font-size:12.5px;letter-spacing:-0.32px;color:#838383;text-shadow:0 0 1.5px #fff,0 0 1.5px #fff,0 0 2px #fff;">Straßburg</div>
<div class="t" style="left:1673.6px;top:929.75px;font-size:12.5px;letter-spacing:0.12px;color:#838383;text-shadow:0 0 1.5px #fff,0 0 1.5px #fff,0 0 2px #fff;">München</div>
<div class="t" style="left:1860.4px;top:927.75px;font-size:12.5px;letter-spacing:-0.31px;color:#838383;text-shadow:0 0 1.5px #fff,0 0 1.5px #fff,0 0 2px #fff;">Wien</div>
<div class="t" style="left:1581.4px;top:977.75px;font-size:12.5px;letter-spacing:0.26px;color:#838383;text-shadow:0 0 1.5px #fff,0 0 1.5px #fff,0 0 2px #fff;">Zürich</div>
<div class="t" style="left:1774.8px;top:966.00px;font-size:15px;letter-spacing:0.02px;color:#858585;text-shadow:0 0 1.5px #fff,0 0 1.5px #fff,0 0 2px #fff;">Österreich</div>
<div class="t" style="left:1418.7px;top:693.00px;font-size:17px;letter-spacing:-1.38px;color:#858585;text-shadow:0 0 1.5px #fff,0 0 1.5px #fff,0 0 2px #fff;">Nie</div>
<div class="t" style="left:1417.5px;top:760.75px;font-size:12.5px;letter-spacing:-0.55px;color:#838383;text-shadow:0 0 1.5px #fff,0 0 1.5px #fff,0 0 2px #fff;">sel</div>
<div class="t" style="left:1416.0px;top:790.00px;font-size:17px;letter-spacing:-0.82px;color:#858585;text-shadow:0 0 1.5px #fff,0 0 1.5px #fff,0 0 2px #fff;">.gie</div>
<div class="t" style="left:1868.5px;top:836.00px;font-size:17px;letter-spacing:-1.12px;color:#858585;text-shadow:0 0 1.5px #fff,0 0 1.5px #fff,0 0 2px #fff;">ien</div>
<div class="t" style="left:1885.0px;top:866.75px;font-size:12.5px;color:#838383;text-shadow:0 0 1.5px #fff,0 0 1.5px #fff,0 0 2px #fff;">B</div>
<!--TEXTS-END-->
</body>
</html>
